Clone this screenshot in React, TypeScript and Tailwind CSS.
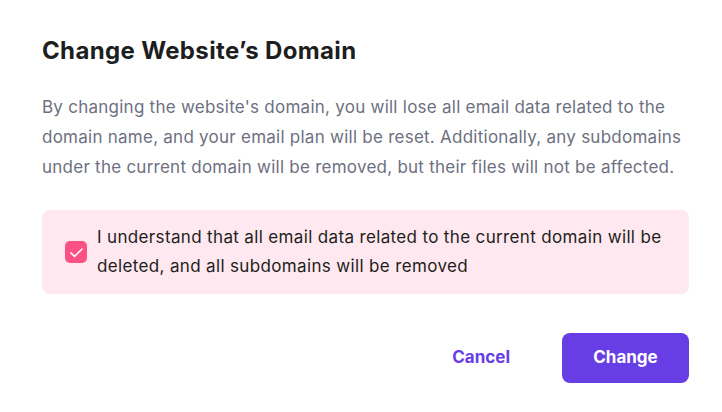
import React from "react";

function CheckIcon() {
  return (
    <svg viewBox="0 0 24 24" className="h-[19px] w-[19px]" fill="none" stroke="white" strokeWidth={1.9} strokeLinecap="round" strokeLinejoin="round">
      <path d="M5 12.5l4.5 4.5L19 7.5" />
    </svg>
  );
}

export default function App() {
  return (
    <div className="w-[722px] h-[412px] bg-white font-['Inter',sans-serif] pl-[42px] pr-[33px] pt-[35px]">
      {/* Title */}
      <h2 className="text-[24px] leading-[32px] font-bold text-[#1d1e20] tracking-[0.35px]">
        Change Website’s Domain
      </h2>

      {/* Description */}
      <p className="mt-[25px] text-[17px] leading-[30px] tracking-[0.25px] text-[#6d7081] whitespace-nowrap">
        By changing the website's domain, you will lose all email data related to the
        <br />
        domain name, and your email plan will be reset. Additionally, any subdomains
        <br />
        under the current domain will be removed, but their files will not be affected.
      </p>

      {/* Confirmation */}
      <div className="mt-[28px] flex items-center gap-[10px] rounded-lg bg-[#ffe8ef] pl-[23px] pr-6 py-[13px]">
        <div className="flex h-[22px] w-[22px] shrink-0 items-center justify-center rounded-[5px] bg-[#fc5185]">
          <CheckIcon />
        </div>
        <p className="text-[17px] leading-[29px] tracking-[0.35px] text-[#1d1e20] whitespace-nowrap">
          I understand that all email data related to the current domain will be
          <br />
          deleted, and all subdomains will be removed
        </p>
      </div>

      {/* Actions */}
      <div className="mt-[39px] flex items-center justify-end gap-[18px]">
        <button className="px-[34px] h-[50px] text-[17px] font-bold text-[#673de6]">
          Cancel
        </button>
        <button className="h-[50px] w-[127px] rounded-lg bg-[#673de6] text-[17px] font-bold text-white">
          Change
        </button>
      </div>
    </div>
  );
}
